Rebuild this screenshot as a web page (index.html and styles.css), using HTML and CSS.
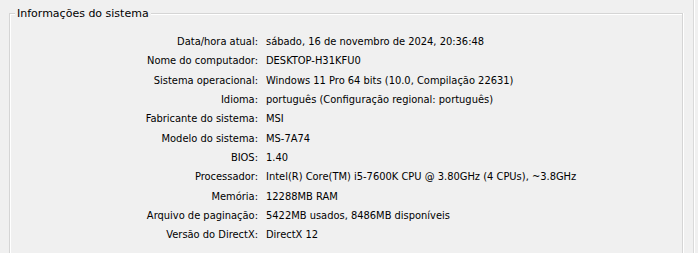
FILE: index.html
```html
<!DOCTYPE html>
<html lang="pt">
<head>
<meta charset="utf-8">
<title>Informações do sistema</title>
<link rel="stylesheet" href="styles.css">
</head>
<body>
<div class="panel">
  <fieldset class="group">
    <legend class="group-title">Informações do sistema</legend>
    <dl class="info">
      <dt>Data/hora atual:</dt><dd>sábado, 16 de novembro de 2024, 20:36:48</dd>
      <dt>Nome do computador:</dt><dd>DESKTOP-H31KFU0</dd>
      <dt>Sistema operacional:</dt><dd>Windows 11 Pro 64 bits (10.0, Compilação 22631)</dd>
      <dt>Idioma:</dt><dd>português (Configuração regional: português)</dd>
      <dt>Fabricante do sistema:</dt><dd>MSI</dd>
      <dt>Modelo do sistema:</dt><dd>MS-7A74</dd>
      <dt>BIOS:</dt><dd>1.40</dd>
      <dt>Processador:</dt><dd>Intel(R) Core(TM) i5-7600K CPU @ 3.80GHz (4 CPUs), ~3.8GHz</dd>
      <dt>Memória:</dt><dd>12288MB RAM</dd>
      <dt>Arquivo de paginação:</dt><dd>5422MB usados, 8486MB disponíveis</dd>
      <dt>Versão do DirectX:</dt><dd>DirectX 12</dd>
    </dl>
  </fieldset>
</div>
</body>
</html>
```
FILE: styles.css
```css
html, body {
  margin: 0;
  padding: 0;
  background: #f0f0f0;
  overflow: hidden;
}
body {
  font-family: "DejaVu Sans", "Liberation Sans", sans-serif;
  font-stretch: condensed;
  font-size: 11px;
  color: #000;
}
.panel {
  width: 694px;
  height: 253px;
  border-right: 1px solid #d9d9d9;
  box-shadow: 1px 0 0 #ffffff;
  box-sizing: border-box;
  padding-top: 7px;
  overflow: hidden;
}
.group {
  margin: 0 0 0 9px;
  width: 674px;
  height: 246px;
  box-sizing: border-box;
  border: 1px solid #d5d5d5;
  border-bottom: none;
  box-shadow: inset 1px 1px 0 #ffffff, 1px 0 0 #ffffff;
  padding: 12px 0 0 0;
}
.group-title {
  margin-left: 5px;
  padding: 0 2px;
  background: #f0f0f0;
  line-height: 13px;
  font-stretch: normal;
  font-size: 11px;
}
.info {
  margin: 0;
  display: grid;
  grid-template-columns: 248px auto;
  column-gap: 8px;
  grid-auto-rows: 19.3px;
  align-items: center;
}
.info dt {
  text-align: right;
  white-space: nowrap;
}
.info dd {
  margin: 0;
  white-space: nowrap;
}
```
